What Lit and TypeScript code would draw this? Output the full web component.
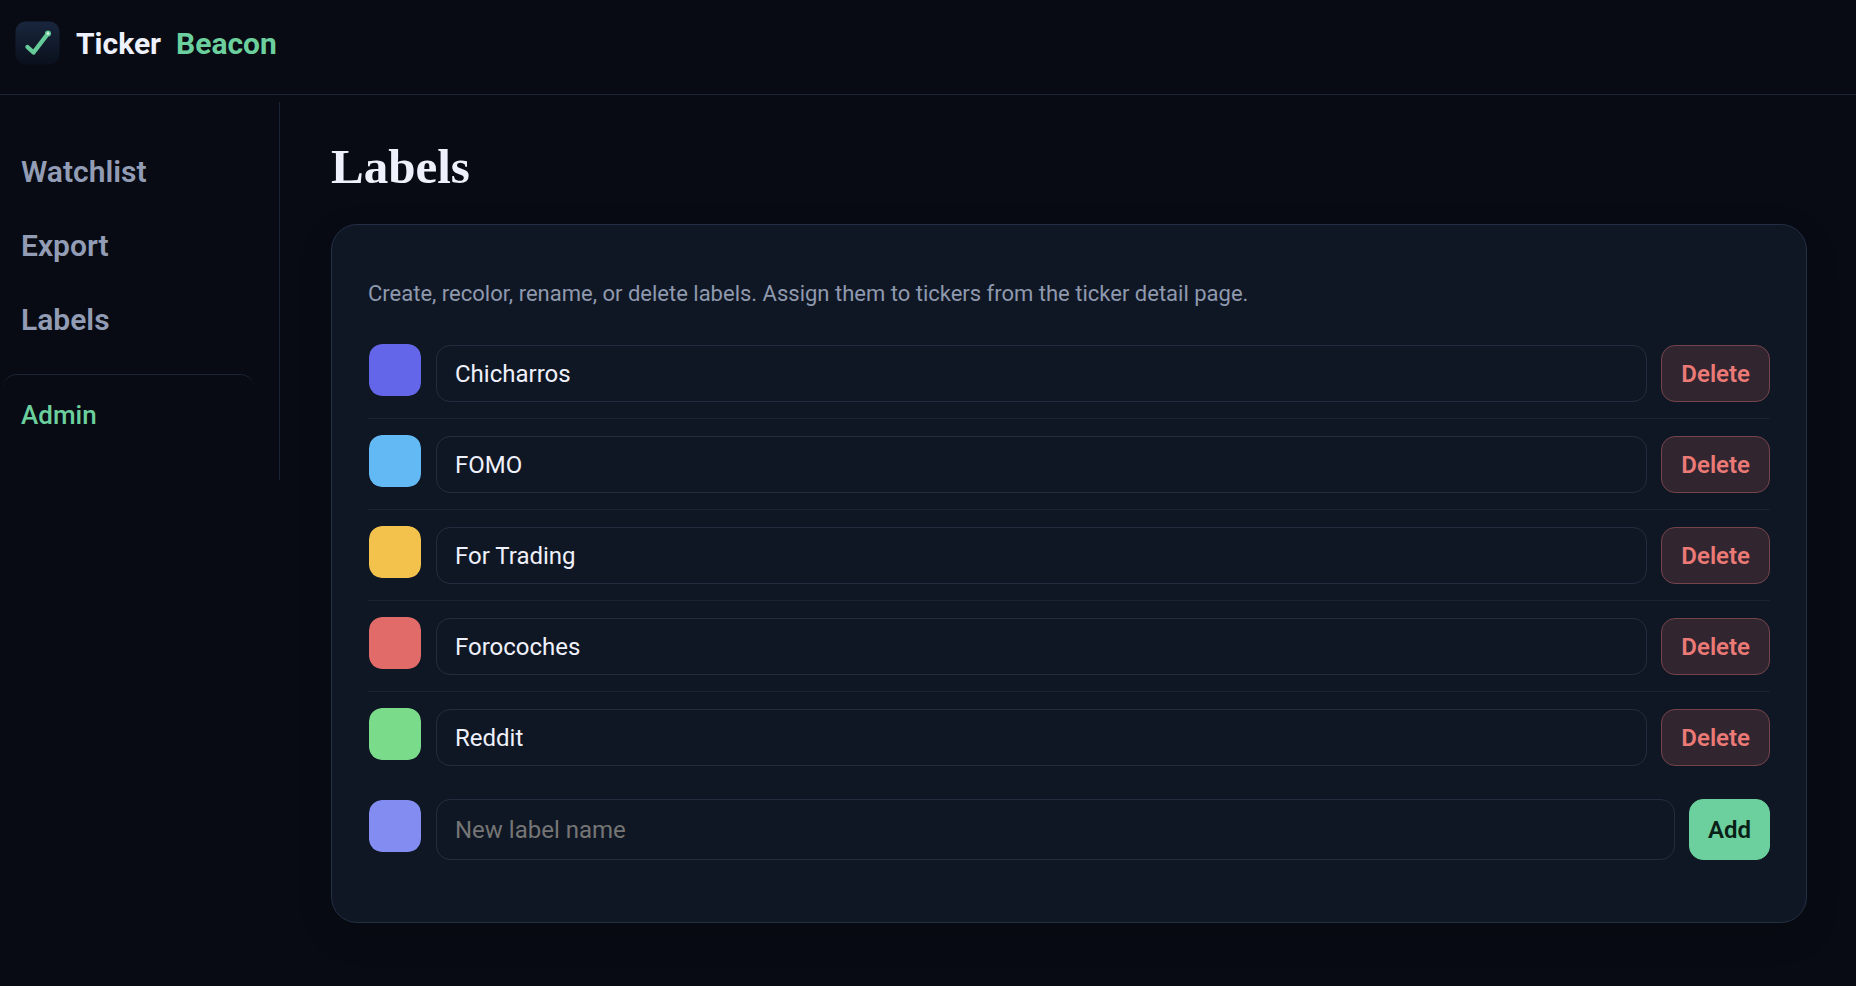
import { LitElement, html, css } from "lit";
import { customElement, state } from "lit/decorators.js";

interface Label {
  id: number;
  name: string;
  color: string;
}

@customElement("app-logo")
export class AppLogo extends LitElement {
  static styles = css`
    :host {
      display: block;
      width: 45px;
      height: 45px;
    }
    .mark {
      display: block;
      width: 100%;
      height: 100%;
    }
  `;

  render() {
    return html`
      <svg class="mark" viewBox="0 0 45 45" aria-hidden="true">
        <defs>
          <linearGradient id="tile" x1="0" y1="0" x2="0" y2="1">
            <stop offset="0" stop-color="#19263d" />
            <stop offset="1" stop-color="#0a101c" />
          </linearGradient>
        </defs>
        <rect x="0.5" y="0.5" width="44" height="43" rx="10" fill="url(#tile)" />
        <path
          d="M12.5 26L18.5 31.5L33 12.5"
          fill="none"
          stroke="#66cb98"
          stroke-width="4.4"
          stroke-linecap="round"
          stroke-linejoin="round"
        />
        <circle cx="33" cy="12.5" r="3" fill="#66cb98" />
        <circle cx="33" cy="12.5" r="1.3" fill="#e3f6ec" />
      </svg>
    `;
  }
}

@customElement("app-root")
export class AppRoot extends LitElement {
  static styles = css`
    :host {
      display: block;
      min-height: 100vh;
      box-sizing: border-box;
      background: #080b13;
      color: #eef1fb;
      font-family: Roboto, "Noto Sans", sans-serif;
      font-size: 24px;
      line-height: 28px;
    }
    *,
    *::before,
    *::after {
      box-sizing: border-box;
    }
    .topbar {
      display: flex;
      align-items: flex-start;
      height: 95px;
      padding: 21px 15px 0;
      border-bottom: 1px solid #1a2434;
    }
    .brand {
      display: flex;
      align-items: center;
      gap: 16px;
      color: inherit;
      text-decoration: none;
      font-size: 30px;
      line-height: 44px;
      font-weight: 700;
    }
    .name {
      display: flex;
      gap: 15px;
    }
    .accent {
      color: #6bd09d;
    }
    .layout {
      display: grid;
      grid-template-columns: 280px minmax(0, 1fr);
      align-items: start;
      padding-top: 7px;
    }
    .side {
      display: flex;
      flex-direction: column;
      min-height: 378px;
      padding: 33px 25px 0 3px;
      border-right: 1px solid #1a2434;
    }
    .link {
      display: block;
      padding: 19px 18px;
      color: #929db5;
      text-decoration: none;
      font-size: 30px;
      line-height: 36px;
      font-weight: 600;
    }
    .admin {
      margin-top: 17px;
      padding-top: 22px;
      border-top: 1px solid #1a2434;
      border-radius: 14px;
      color: #6bd09d;
      font-size: 26px;
      font-weight: 500;
    }
    .main {
      padding: 32px 49px 62px 51px;
    }
    .title {
      margin: 0 0 24px;
      font-family: "Liberation Serif", serif;
      font-size: 49px;
      line-height: 66px;
      font-weight: 700;
    }
    .card {
      padding: 53px 36px 62px;
      border: 1px solid #232f45;
      border-radius: 26px;
      background: #101724;
      box-shadow: 0 12px 36px #0000001f;
    }
    .help {
      margin: 0 0 33px;
      color: #8f99ae;
      font-size: 22px;
      line-height: 32px;
    }
    .list {
      margin: 0;
      padding: 0;
      list-style: none;
    }
    .row,
    .create {
      display: flex;
      gap: 14px;
      align-items: flex-end;
    }
    .row + .row {
      margin-top: 16px;
      padding-top: 15px;
      border-top: 1px solid #1a2431;
    }
    .create {
      margin-top: 33px;
    }
    .swatch {
      appearance: none;
      flex: none;
      align-self: flex-start;
      width: 54px;
      height: 54px;
      margin: 0 0 5px;
      padding: 0;
      border: 1px solid transparent;
      border-radius: 14px;
      background: none;
      cursor: pointer;
    }
    .swatch::-webkit-color-swatch-wrapper {
      padding: 0;
    }
    .swatch::-webkit-color-swatch {
      border: 0;
      border-radius: 13px;
    }
    .field {
      flex: 1;
      min-width: 0;
      height: 57px;
      padding: 0 18px;
      border: 1px solid #222e40;
      border-radius: 14px;
      background: #101724;
      color: #eef1fb;
      font: inherit;
    }
    .field::placeholder {
      color: #757575;
      opacity: 1;
    }
    .button {
      flex: none;
      height: 57px;
      padding: 0 19px;
      border: 1px solid #75444b;
      border-radius: 14px;
      background: #312530;
      color: #eb7a77;
      font: inherit;
      font-weight: 600;
      cursor: pointer;
    }
    .create .field,
    .create .button {
      height: 61px;
      padding: 1px 18px 0;
    }
    .create .button {
      border-color: #6bd09d;
      background: #6bd09d;
      color: #0a1f18;
    }
  `;

  @state() private labels: Label[] = [
    { id: 1, name: "Chicharros", color: "#6366e8" },
    { id: 2, name: "FOMO", color: "#62b9f4" },
    { id: 3, name: "For Trading", color: "#f3c24d" },
    { id: 4, name: "Forocoches", color: "#e16b68" },
    { id: 5, name: "Reddit", color: "#7adc8a" },
  ];
  @state() private draftName = "";
  @state() private draftColor = "#838cf1";

  private editLabel(id: number, patch: Partial<Label>) {
    this.labels = this.labels.map((l) => (l.id === id ? { ...l, ...patch } : l));
  }

  private removeLabel(id: number) {
    this.labels = this.labels.filter((l) => l.id !== id);
  }

  private addLabel(e: Event) {
    e.preventDefault();
    const name = this.draftName.trim();
    if (!name) return;
    const id = Math.max(0, ...this.labels.map((l) => l.id)) + 1;
    this.labels = [...this.labels, { id, name, color: this.draftColor }];
    this.draftName = "";
  }

  private renderRow(label: Label) {
    return html`
      <li class="row">
        <input
          class="swatch"
          type="color"
          aria-label="Label color"
          .value=${label.color}
          @input=${(e: Event) =>
            this.editLabel(label.id, { color: (e.target as HTMLInputElement).value })}
        />
        <input
          class="field"
          type="text"
          aria-label="Label name"
          .value=${label.name}
          @change=${(e: Event) =>
            this.editLabel(label.id, { name: (e.target as HTMLInputElement).value })}
        />
        <button class="button" type="button" @click=${() => this.removeLabel(label.id)}>
          Delete
        </button>
      </li>
    `;
  }

  render() {
    return html`
      <header class="topbar">
        <a class="brand" href="#">
          <app-logo></app-logo>
          <span class="name"><span>Ticker</span><span class="accent">Beacon</span></span>
        </a>
      </header>
      <div class="layout">
        <nav class="side">
          <a class="link" href="#watchlist">Watchlist</a>
          <a class="link" href="#export">Export</a>
          <a class="link" href="#labels">Labels</a>
          <a class="link admin" href="#admin">Admin</a>
        </nav>
        <main class="main">
          <h1 class="title">Labels</h1>
          <section class="card">
            <p class="help">
              Create, recolor, rename, or delete labels. Assign them to tickers from the ticker
              detail page.
            </p>
            <ul class="list">
              ${this.labels.map((label) => this.renderRow(label))}
            </ul>
            <form class="create" @submit=${this.addLabel}>
              <input
                class="swatch"
                type="color"
                aria-label="New label color"
                .value=${this.draftColor}
                @input=${(e: Event) => (this.draftColor = (e.target as HTMLInputElement).value)}
              />
              <input
                class="field"
                type="text"
                aria-label="New label name"
                placeholder="New label name"
                .value=${this.draftName}
                @input=${(e: Event) => (this.draftName = (e.target as HTMLInputElement).value)}
              />
              <button class="button" type="submit">Add</button>
            </form>
          </section>
        </main>
      </div>
    `;
  }
}
